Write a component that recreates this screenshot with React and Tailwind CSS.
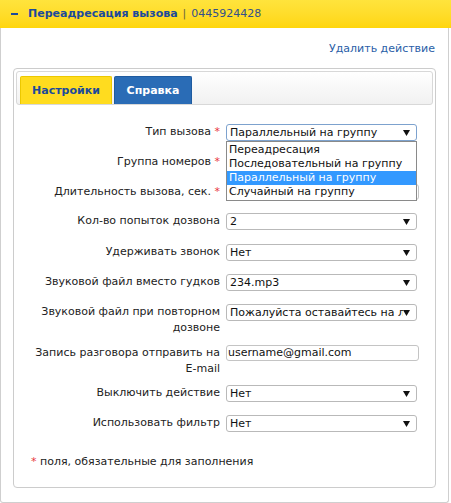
import { useMemo } from "react";

const ROWS = [
  { label: "Тип вызова", req: true, kind: "select", value: "Параллельный на группу", top: 0, focus: true },
  { label: "Группа номеров", req: true, kind: "select", value: "", top: 13 },
  { label: "Длительность вызова, сек.", req: true, kind: "input", value: "", top: 13 },
  { label: "Кол-во попыток дозвона", kind: "select", value: "2", top: 13 },
  { label: "Удерживать звонок", kind: "select", value: "Нет", top: 14 },
  { label: "Звуковой файл вместо гудков", kind: "select", value: "234.mp3", top: 13 },
  { label: "Звуковой файл при повторном дозвоне", kind: "select", value: "Пожалуйста оставайтесь на линии", top: 13 },
  { label: "Запись разговора отправить на E-mail", kind: "input", value: "username@gmail.com", top: 9 },
  { label: "Выключить действие", kind: "select", value: "Нет", top: 8 },
  { label: "Использовать фильтр", kind: "select", value: "Нет", top: 13 },
];

const OPTIONS = [
  "Переадресация",
  "Последовательный на группу",
  "Параллельный на группу",
  "Случайный на группу",
];

function Arrow() {
  return (
    <svg width="7" height="6" viewBox="0 0 7 6" className="shrink-0">
      <path d="M0 0 H7 L3.5 6 Z" fill="#111" />
    </svg>
  );
}

function Select({ value, focus, open }) {
  return (
    <div className="relative">
      <div
        className={`flex h-[17px] w-[191px] items-center justify-between rounded-[3px] border bg-white pl-[3px] pr-[6px] ${
          focus ? "border-[#7da2ce]" : "border-[#b9b9b9]"
        }`}
      >
        <span className="overflow-hidden whitespace-nowrap pr-1 text-[#111]">{value}</span>
        <Arrow />
      </div>
      {open && (
        <div className="absolute left-0 top-[17px] z-10 w-[191px] border border-[#8a8a8a] bg-white py-px">
          {OPTIONS.map((o) => (
            <div
              key={o}
              className={`h-[14px] pl-[2px] leading-[14px] ${
                o === "Параллельный на группу" ? "bg-[#3399ff] text-white" : "text-[#111]"
              }`}
            >
              {o}
            </div>
          ))}
        </div>
      )}
    </div>
  );
}

function Input({ value }) {
  return (
    <div className="flex h-[16px] w-[193px] items-center rounded-[3px] border border-[#c4c4c4] bg-white pl-px text-[#111]">
      {value}
    </div>
  );
}

function App() {
  const rows = useMemo(() => ROWS, []);

  return (
    <div className="h-[503px] w-[451px] bg-white text-[11px] leading-[16px] text-[#222] [font-family:'DejaVu_Sans',sans-serif]">
      <header className="flex h-[28px] items-center bg-gradient-to-b from-[#ffe43c] to-[#ffd60a] pl-[11px] text-[#1c4a9b]">
        <span className="mr-[10px] h-[2px] w-[7px] bg-[#1c4a9b]" />
        <span className="font-bold">Переадресация вызова</span>
        <span className="mx-[5px] text-[#6a6440]">|</span>
        <span className="text-[#34508a]">0445924428</span>
      </header>

      <div className="h-[475px] w-[449px] rounded-b-[3px] border border-t-0 border-[#cfcfcf] px-[12px]">
        <div className="flex justify-end pt-[13px] pb-[11px] pr-px">
          <span className="text-[#2a5ea7]">Удалить действие</span>
        </div>

        <div className="h-[420px] rounded-[4px] border border-[#cccccc] p-[2px]">
          <div className="flex h-[34px] items-end gap-[2px] rounded-[3px] border border-[#d8d8d8] bg-gradient-to-b from-[#ffffff] to-[#f1f1f1] px-[3px]">
            <div className="flex h-[28px] w-[92px] items-center justify-center rounded-t-[2px] border border-b-0 border-[#ecc800] bg-[#ffdc1f] font-bold text-[#1c4a9b]">
              Настройки
            </div>
            <div className="flex h-[28px] w-[78px] items-center justify-center rounded-t-[2px] border border-b-0 border-[#1f5b9f] bg-[#2a6cb6] font-bold text-white">
              Справка
            </div>
          </div>

          <div className="pt-[19px] pl-[15px]">
            {rows.map((r, i) => (
              <div key={i} className="flex items-start gap-[6px]" style={{ marginTop: r.top }}>
                <div className="w-[189px] text-right">
                  {r.label}
                  {r.req && <span className="text-[#e8383d]"> *</span>}
                </div>
                {r.kind === "select" ? (
                  <Select value={r.value} focus={r.focus} open={r.focus} />
                ) : (
                  <Input value={r.value} />
                )}
              </div>
            ))}

            <div className="mt-[22px]">
              <span className="text-[#e8383d]">*</span> поля, обязательные для заполнения
            </div>
          </div>
        </div>
      </div>
    </div>
  );
}

export default App;
